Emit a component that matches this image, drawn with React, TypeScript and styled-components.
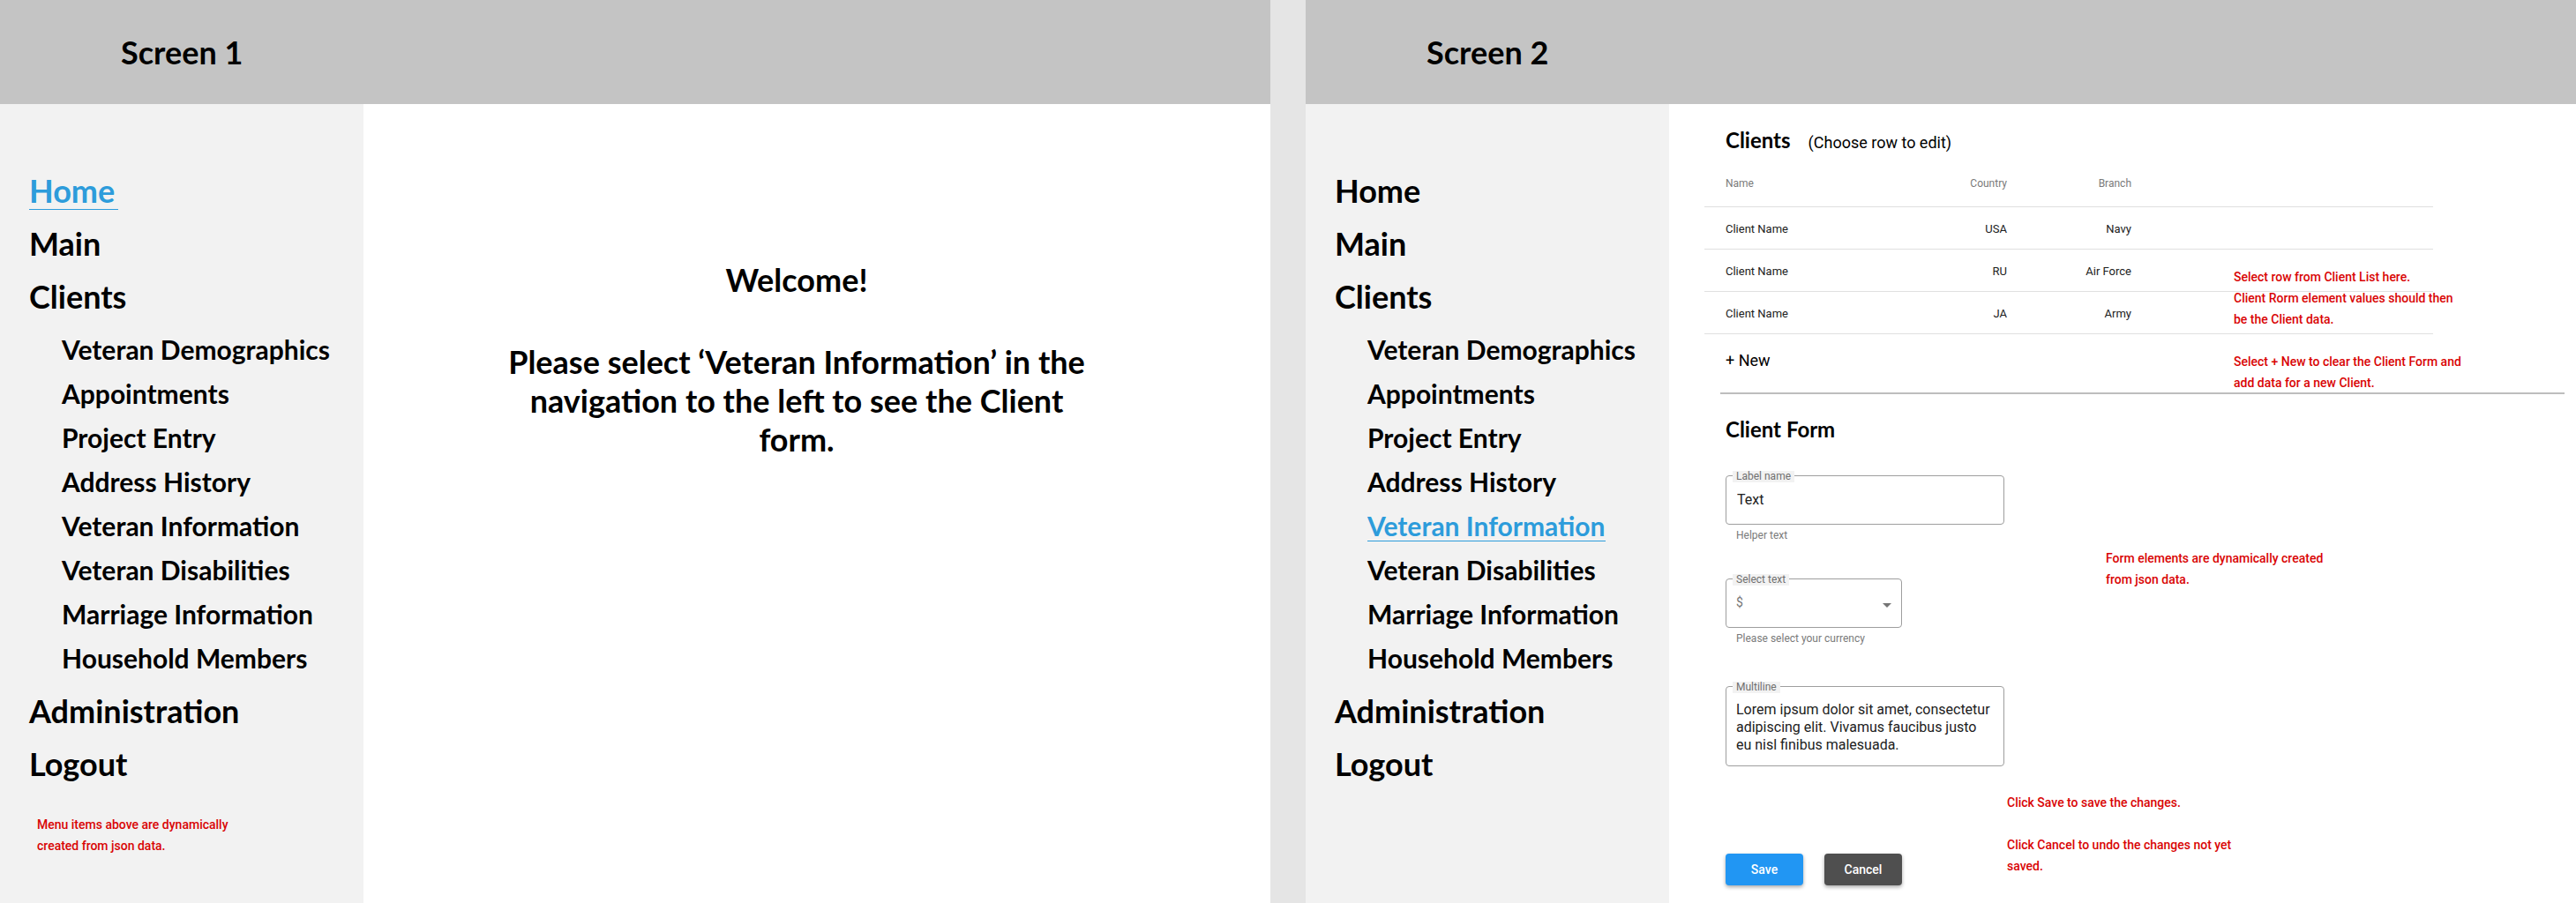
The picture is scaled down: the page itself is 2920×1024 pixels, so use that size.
import React from "react";
import styled, { createGlobalStyle } from "styled-components";

const GlobalStyle = createGlobalStyle`
  *, *::before, *::after { box-sizing: border-box; }
  body { margin: 0; background: #e5e5e5; color: #000; font-family: Roboto, sans-serif; }
  h1, h2, p, ul { margin: 0; padding: 0; }
  ul { list-style: none; }
`;

const Board = styled.div`
  display: grid;
  grid-template-columns: 1fr 1fr;
  column-gap: 40px;
  min-height: 100vh;
`;

const Screen = styled.section`
  display: flex;
  flex-direction: column;
  background: #fff;
`;

const Header = styled.header`
  display: flex;
  align-items: center;
  height: 118px;
  padding-left: 137px;
  background: #c4c4c4;
`;

const ScreenTitle = styled.h1`
  font: 700 36px/44px Lato, sans-serif;
`;

const Body = styled.div`
  display: flex;
  flex: 1;
`;

const Sidebar = styled.aside`
  flex: 0 0 412px;
  padding: 76px 0 0 33px;
  background: #f2f2f2;
`;

const Menu = styled.ul`
  display: flex;
  flex-direction: column;
  gap: 16px;
`;

const SubMenu = styled.ul`
  display: flex;
  flex-direction: column;
  gap: 14px;
  padding: 20px 0 4px 37px;
`;

const MenuLink = styled.a<{ $active: boolean; $sub?: boolean }>`
  display: block;
  width: fit-content;
  padding-top: 2px;
  padding-right: ${(p) => (p.$sub ? 0 : 4)}px;
  border-bottom: 1px solid ${(p) => (p.$active ? "#2d9cdb" : "transparent")};
  color: ${(p) => (p.$active ? "#2d9cdb" : "#000")};
  font: 700 ${(p) => (p.$sub ? "30px/33px" : "36px/41px")} Lato, sans-serif;
  text-decoration: none;
`;

const Note = styled.p`
  color: #d90404;
  font: 500 14px/24px Roboto, sans-serif;
`;

const SidebarNote = styled(Note)`
  max-width: 240px;
  margin: 35px 0 0 9px;
`;

const WelcomeMain = styled.main`
  flex: 1;
  padding: 177px 40px 0 148px;
`;

const WelcomeText = styled.div`
  display: flex;
  flex-direction: column;
  gap: 49px;
  max-width: 686px;
  font: 700 36px/44px Lato, sans-serif;
  text-align: center;
`;

const ClientsMain = styled.main`
  flex: 1;
  padding: 27px 13px 20px 40px;
`;

const ClientList = styled.section`
  display: grid;
  grid-template-columns: 600px 1fr;
`;

const ListContent = styled.div`
  grid-area: 1 / 1 / 2 / 3;
`;

const ListNotes = styled.div`
  grid-area: 1 / 2 / 2 / 3;
  display: flex;
  flex-direction: column;
  align-self: start;
  gap: 24px;
  height: 0;
  max-width: 270px;
  padding-top: 157px;
`;

const ListHeading = styled.div`
  display: flex;
  align-items: baseline;
  gap: 20px;
  height: 34px;
  padding-left: 24px;
`;

const Heading = styled.h2`
  font: 700 24px/28px Lato, sans-serif;
`;

const Hint = styled.span`
  font-size: 18px;
`;

const Table = styled.table`
  width: 100%;
  max-width: 826px;
  border-collapse: separate;
  border-spacing: 0;
  table-layout: fixed;
`;

const NameCol = styled.col`
  width: 200px;
`;

const ValueCol = styled.col<{ $width?: number }>`
  width: ${(p) => (p.$width ? `${p.$width}px` : "auto")};
`;

const HeadCell = styled.th<{ $right?: boolean }>`
  height: 56px;
  padding: 2px 0 0 ${(p) => (p.$right ? 0 : 24)}px;
  border-bottom: 1px solid #e0e0e0;
  color: #7a7a7a;
  font-size: 12px;
  font-weight: 400;
  text-align: ${(p) => (p.$right ? "right" : "left")};
`;

const Cell = styled.td<{ $right?: boolean }>`
  height: 48px;
  padding: 2px 0 0 ${(p) => (p.$right ? 0 : 24)}px;
  border-bottom: 1px solid #e0e0e0;
  color: #212121;
  font-size: 13px;
  text-align: ${(p) => (p.$right ? "right" : "left")};
`;

const NewButton = styled.button`
  display: block;
  margin: 18px 0 24px 24px;
  padding: 0;
  border: 0;
  background: none;
  color: #000;
  font: 400 18px/24px Roboto, sans-serif;
`;

const Divider = styled.hr`
  height: 2px;
  margin: 0 0 26px 18px;
  border: 0;
  background: #bdbdbd;
`;

const ClientForm = styled.form`
  padding-left: 24px;
`;

const FormRow = styled.div<{ $top: number }>`
  display: grid;
  grid-template-columns: 316px 1fr;
  column-gap: 3px;
  padding-top: ${(p) => p.$top}px;
`;

const Fields = styled.div`
  display: flex;
  flex-direction: column;
`;

const Field = styled.div<{ $width?: number; $after?: number }>`
  position: relative;
  width: 100%;
  max-width: ${(p) => p.$width ?? 316}px;
  margin-bottom: ${(p) => p.$after ?? 0}px;
`;

const FieldLabel = styled.label`
  position: absolute;
  top: -5px;
  left: 8px;
  padding: 0 4px 1px;
  background: #f2f2f2;
  color: #6f6f6f;
  font-size: 12px;
  line-height: 12px;
`;

const outline = `
  display: block;
  width: 100%;
  margin: 0;
  border: 1px solid #9e9e9e;
  border-radius: 4px;
  background: #fff;
  outline: 0;
`;

const TextInput = styled.input`
  ${outline}
  height: 56px;
  padding: 0 12px 2px;
  color: #212121;
  font: 400 16px/20px Roboto, sans-serif;
`;

const Select = styled.select`
  ${outline}
  height: 56px;
  padding: 0 11px 2px;
  appearance: none;
  color: #757575;
  font: 400 14px/20px Roboto, sans-serif;
`;

const TextArea = styled.textarea`
  ${outline}
  height: 91px;
  padding: 16px 11px 0;
  overflow: hidden;
  resize: none;
  color: #212121;
  font: 400 16px/20px Roboto, sans-serif;
`;

const Arrow = styled.svg`
  position: absolute;
  top: 28px;
  right: 12px;
  pointer-events: none;
`;

const Helper = styled.p`
  padding: 4px 0 0 12px;
  color: #7a7a7a;
  font-size: 12px;
  line-height: 16px;
`;

const FormNote = styled(Note)`
  max-width: 270px;
  margin: 82px 0 0 112px;
`;

const Actions = styled.div`
  display: flex;
  gap: 24px;
  padding-top: 70px;
`;

const ActionNotes = styled.div`
  display: flex;
  flex-direction: column;
  gap: 24px;
  max-width: 270px;
`;

const ActionButton = styled.button<{ $color: string }>`
  width: 88px;
  height: 36px;
  padding: 0;
  border: 0;
  border-radius: 4px;
  background: ${(p) => p.$color};
  box-shadow: 0 2px 4px rgba(0, 0, 0, 0.35);
  color: #fff;
  font: 500 14px/20px Roboto, sans-serif;
`;

type MenuEntry = { label: string; children?: string[] };

const menu: MenuEntry[] = [
  { label: "Home" },
  { label: "Main" },
  {
    label: "Clients",
    children: [
      "Veteran Demographics",
      "Appointments",
      "Project Entry",
      "Address History",
      "Veteran Information",
      "Veteran Disabilities",
      "Marriage Information",
      "Household Members",
    ],
  },
  { label: "Administration" },
  { label: "Logout" },
];

const clients = [
  { name: "Client Name", country: "USA", branch: "Navy" },
  { name: "Client Name", country: "RU", branch: "Air Force" },
  { name: "Client Name", country: "JA", branch: "Army" },
];

function Navigation({ active }: { active: string }) {
  return (
    <nav>
      <Menu>
        {menu.map((item) => (
          <li key={item.label}>
            <MenuLink href="#" $active={item.label === active}>
              {item.label}
            </MenuLink>
            {item.children && (
              <SubMenu>
                {item.children.map((child) => (
                  <li key={child}>
                    <MenuLink href="#" $sub $active={child === active}>
                      {child}
                    </MenuLink>
                  </li>
                ))}
              </SubMenu>
            )}
          </li>
        ))}
      </Menu>
    </nav>
  );
}

function HomeScreen() {
  return (
    <Screen>
      <Header>
        <ScreenTitle>Screen 1</ScreenTitle>
      </Header>
      <Body>
        <Sidebar>
          <Navigation active="Home" />
          <SidebarNote>Menu items above are dynamically created from json data.</SidebarNote>
        </Sidebar>
        <WelcomeMain>
          <WelcomeText>
            <p>Welcome!</p>
            <p>Please select ‘Veteran Information’ in the navigation to the left to see the Client form.</p>
          </WelcomeText>
        </WelcomeMain>
      </Body>
    </Screen>
  );
}

function ClientsScreen() {
  return (
    <Screen>
      <Header>
        <ScreenTitle>Screen 2</ScreenTitle>
      </Header>
      <Body>
        <Sidebar>
          <Navigation active="Veteran Information" />
        </Sidebar>
        <ClientsMain>
          <ClientList>
            <ListContent>
              <ListHeading>
                <Heading>Clients</Heading>
                <Hint>(Choose row to edit)</Hint>
              </ListHeading>
              <Table>
                <colgroup>
                  <NameCol />
                  <ValueCol $width={143} />
                  <ValueCol $width={141} />
                  <ValueCol />
                </colgroup>
                <thead>
                  <tr>
                    <HeadCell>Name</HeadCell>
                    <HeadCell $right>Country</HeadCell>
                    <HeadCell $right>Branch</HeadCell>
                    <HeadCell />
                  </tr>
                </thead>
                <tbody>
                  {clients.map((client) => (
                    <tr key={client.country}>
                      <Cell>{client.name}</Cell>
                      <Cell $right>{client.country}</Cell>
                      <Cell $right>{client.branch}</Cell>
                      <Cell />
                    </tr>
                  ))}
                </tbody>
              </Table>
              <NewButton type="button">+ New</NewButton>
            </ListContent>
            <ListNotes>
              <Note>
                Select row from Client List here.
                <br />
                Client Rorm element values should then
                <br />
                be the Client data.
              </Note>
              <Note>Select + New to clear the Client Form and add data for a new Client.</Note>
            </ListNotes>
          </ClientList>
          <Divider />
          <ClientForm>
            <Heading>Client Form</Heading>
            <FormRow $top={38}>
              <Fields>
                <Field $after={41}>
                  <TextInput id="label-name" type="text" defaultValue="Text" />
                  <FieldLabel htmlFor="label-name">Label name</FieldLabel>
                  <Helper>Helper text</Helper>
                </Field>
                <Field $width={200} $after={46}>
                  <Select id="select-text" defaultValue="$">
                    <option>$</option>
                  </Select>
                  <FieldLabel htmlFor="select-text">Select text</FieldLabel>
                  <Arrow width="10" height="5" viewBox="0 0 10 5" aria-hidden="true">
                    <path d="M0 0h10L5 5z" fill="#757575" />
                  </Arrow>
                  <Helper>Please select your currency</Helper>
                </Field>
                <Field>
                  <TextArea
                    id="multiline"
                    defaultValue="Lorem ipsum dolor sit amet, consectetur adipiscing elit. Vivamus faucibus justo eu nisl finibus malesuada."
                  />
                  <FieldLabel htmlFor="multiline">Multiline</FieldLabel>
                </Field>
              </Fields>
              <FormNote>Form elements are dynamically created from json data.</FormNote>
            </FormRow>
            <FormRow $top={29}>
              <Actions>
                <ActionButton type="submit" $color="#2196f3">
                  Save
                </ActionButton>
                <ActionButton type="reset" $color="#4f4f4f">
                  Cancel
                </ActionButton>
              </Actions>
              <ActionNotes>
                <Note>Click Save to save the changes.</Note>
                <Note>Click Cancel to undo the changes not yet saved.</Note>
              </ActionNotes>
            </FormRow>
          </ClientForm>
        </ClientsMain>
      </Body>
    </Screen>
  );
}

export default function App() {
  return (
    <>
      <GlobalStyle />
      <Board>
        <HomeScreen />
        <ClientsScreen />
      </Board>
    </>
  );
}
